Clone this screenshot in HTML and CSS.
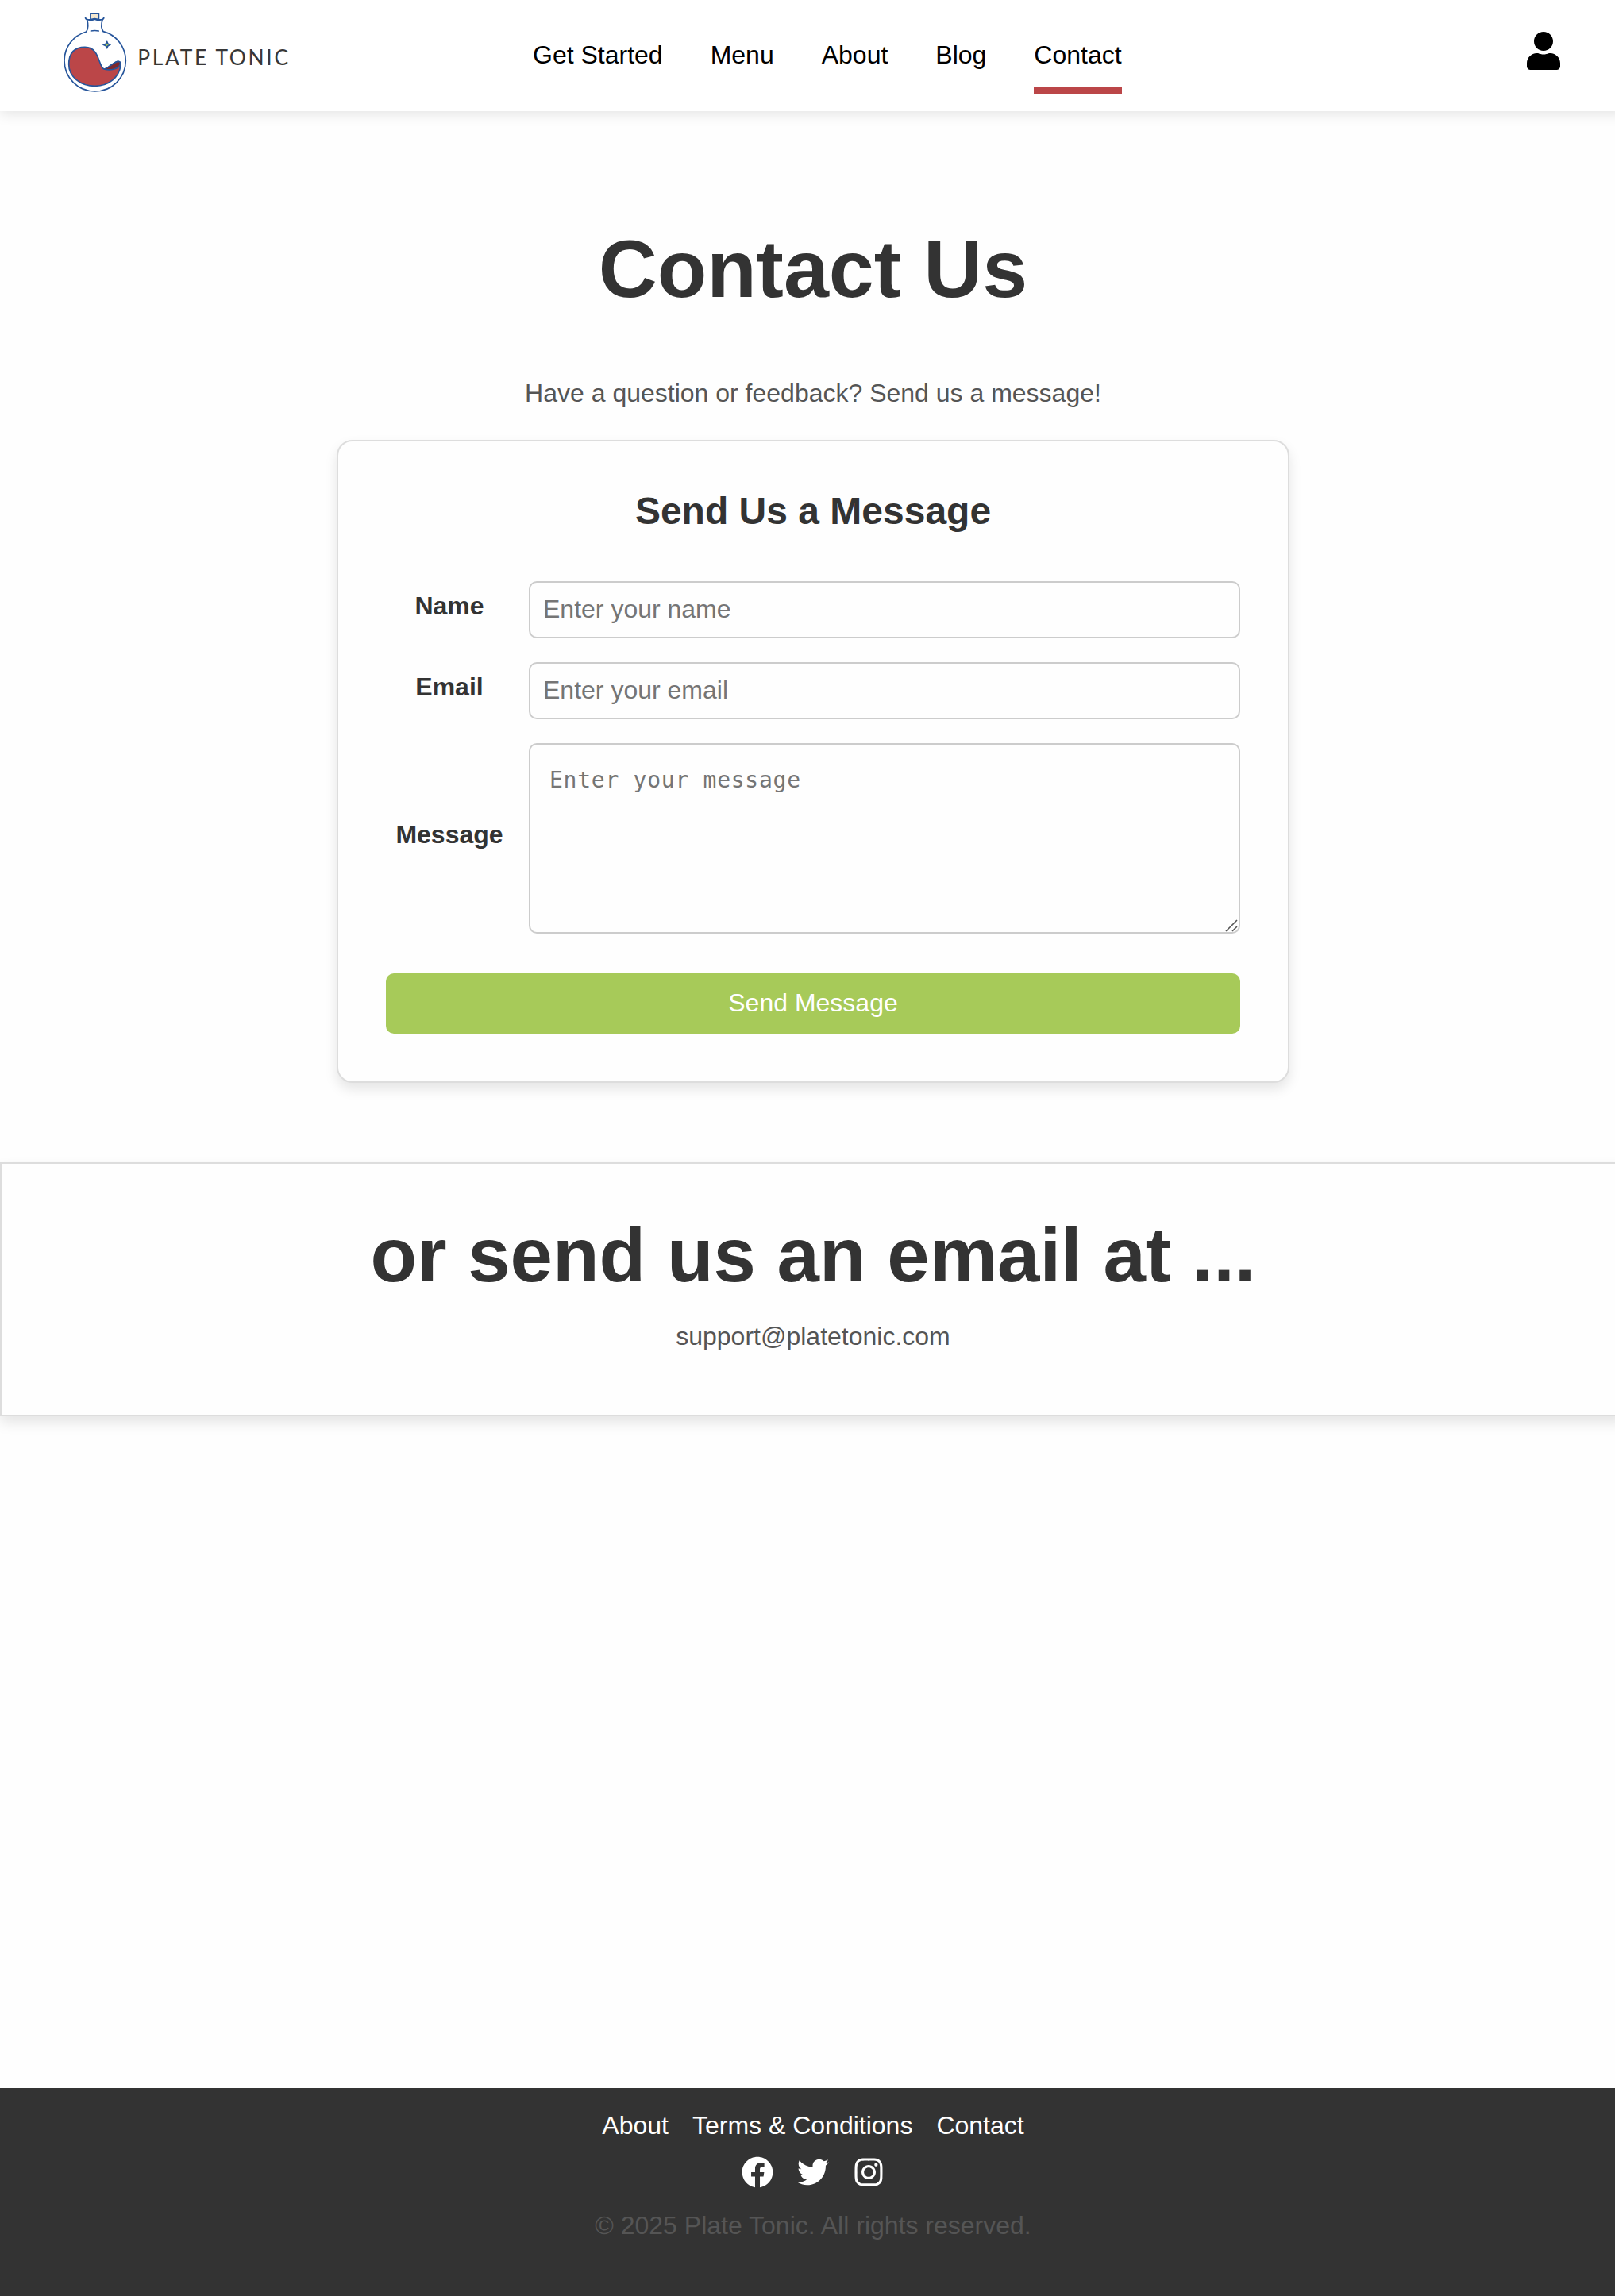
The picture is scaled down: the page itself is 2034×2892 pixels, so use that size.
FILE: index.html
```html
<!DOCTYPE html>
<html lang="en">
<head>
<meta charset="utf-8">
<title>Contact | Plate Tonic</title>
<link rel="stylesheet" href="styles.css">
</head>
<body>
<div class="page">
  <header class="header">
    <a class="logo" href="#">
      <svg viewBox="0 0 960 420" width="320" height="140" role="img" aria-label="Plate Tonic">
        <g stroke="#26559b" stroke-linecap="round" stroke-linejoin="round" fill="none">
          <path d="M162 51H193V74L178 71L162 74Z" fill="#f3e7cf" stroke-width="5.5"/>
          <path d="M143 68C145 75 151 75 159 75C167 76 172 76 178 72C184 76 190 76 197 75C205 75 210 75 212 68" stroke-width="6"/>
          <path d="M149 75C154 92 153 109 146 120C97 134 63 178 63 229C63 294 115 345 179 345C243 345 295 294 295 229C295 178 260 132 210 119C202 108 202 92 207 75" stroke-width="5"/>
          <path d="M163 117Q178 114 193 117" stroke-width="4"/>
          <path d="M80 243C80 200 102 178 141 178C202 178 190 262 217 262C238 250 252 232 267 232C275 232 277 240 276 247C270 292 232 324 180 325C121 325 80 288 80 243Z" fill="#bb4648" stroke-width="5"/>
          <path d="M215 261C238 252 253 232 267 232C276 232 277 241 271 249C263 260 238 268 215 261Z" fill="#7f282d" stroke-width="5"/>
          <path d="M224 157L228 166L237 169L228 173L224 182L220 173L210 169L220 166Z" fill="#a8ca59" stroke-width="5"/>
        </g>
        <text class="logo-text" x="340" y="245" textLength="569" lengthAdjust="spacing">PLATE TONIC</text>
      </svg>
    </a>
    <nav class="nav">
      <a href="#">Get Started</a>
      <a href="#">Menu</a>
      <a href="#">About</a>
      <a href="#">Blog</a>
      <a class="active" href="#">Contact</a>
    </nav>
    <a class="user" href="#" aria-label="Account">
      <svg viewBox="0 0 448 512" width="42" height="48"><path d="M224 256c70.7 0 128-57.3 128-128S294.7 0 224 0 96 57.3 96 128s57.3 128 128 128zm89.6 32h-16.7c-22.2 10.2-46.9 16-72.9 16s-50.6-5.8-72.9-16h-16.7C60.2 288 0 348.2 0 422.4V464c0 26.5 21.5 48 48 48h352c26.5 0 48-21.5 48-48v-41.6c0-74.2-60.2-134.4-134.4-134.4z"/></svg>
    </a>
  </header>

  <main class="main">
    <h1 class="title">Contact Us</h1>
    <p class="lead">Have a question or feedback? Send us a message!</p>

    <form class="card">
      <h2 class="card-title">Send Us a Message</h2>
      <div class="fields">
        <label for="name">Name</label>
        <input id="name" type="text" placeholder="Enter your name">
        <label for="email">Email</label>
        <input id="email" type="email" placeholder="Enter your email">
        <label for="message">Message</label>
        <div class="textarea-wrap">
          <textarea id="message" placeholder="Enter your message"></textarea>
          <svg class="grip" viewBox="0 0 16 16" width="16" height="16"><path d="M1 15L15 1M9 15L15 9"/></svg>
        </div>
      </div>
      <button class="submit" type="button">Send Message</button>
    </form>

    <section class="email-panel">
      <h2>or send us an email at ...</h2>
      <p>support@platetonic.com</p>
    </section>
  </main>

  <footer class="footer">
    <div class="footer-links">
      <a href="#">About</a>
      <a href="#">Terms &amp; Conditions</a>
      <a href="#">Contact</a>
    </div>
    <div class="social">
      <svg viewBox="0 0 512 512"><path d="M504 256C504 119 393 8 256 8S8 119 8 256c0 123.78 90.69 226.38 209.25 245V327.69h-63V256h63v-54.64c0-62.15 37-96.48 93.67-96.48 27.14 0 55.52 4.84 55.52 4.84v61h-31.28c-30.8 0-40.41 19.12-40.41 38.73V256h68.78l-11 71.69h-57.78V501C413.31 482.38 504 379.78 504 256z"/></svg>
      <svg viewBox="0 0 512 512"><path d="M459.37 151.716c.325 4.548.325 9.097.325 13.645 0 138.72-105.583 298.558-298.558 298.558-59.452 0-114.68-17.219-161.137-47.106 8.447.974 16.568 1.299 25.34 1.299 49.055 0 94.213-16.568 130.274-44.832-46.132-.975-84.792-31.188-98.112-72.772 6.498.974 12.995 1.624 19.818 1.624 9.421 0 18.843-1.3 27.614-3.573-48.081-9.747-84.143-51.98-84.143-102.985v-1.299c13.969 7.797 30.214 12.67 47.431 13.319-28.264-18.843-46.781-51.005-46.781-87.391 0-19.492 5.197-37.36 14.294-52.954 51.655 63.675 129.3 105.258 216.365 109.807-1.624-7.797-2.599-15.918-2.599-24.04 0-57.828 46.782-104.934 104.934-104.934 30.213 0 57.502 12.67 76.67 33.137 23.715-4.548 46.456-13.32 66.599-25.34-7.798 24.366-24.366 44.833-46.132 57.827 21.117-2.273 41.584-8.122 60.426-16.243-14.292 20.791-32.161 39.308-52.628 54.253z"/></svg>
      <svg viewBox="0 0 448 512"><path d="M224.1 141c-63.6 0-114.9 51.3-114.9 114.9s51.3 114.9 114.9 114.9S339 319.5 339 255.9 287.7 141 224.1 141zm0 189.6c-41.1 0-74.7-33.5-74.7-74.7s33.5-74.7 74.7-74.7 74.7 33.5 74.7 74.7-33.6 74.7-74.7 74.7zm146.4-194.3c0 14.9-12 26.8-26.8 26.8-14.9 0-26.8-12-26.8-26.8s12-26.8 26.8-26.8 26.8 12 26.8 26.8zm76.1 27.2c-1.7-35.9-9.9-67.7-36.2-93.9-26.2-26.2-58-34.4-93.9-36.2-37-2.1-147.9-2.1-184.9 0-35.8 1.7-67.6 9.9-93.9 36.1s-34.4 58-36.2 93.9c-2.1 37-2.1 147.9 0 184.9 1.7 35.9 9.9 67.7 36.2 93.9s58 34.4 93.9 36.2c37 2.1 147.9 2.1 184.9 0 35.9-1.7 67.7-9.9 93.9-36.2 26.2-26.2 34.4-58 36.2-93.9 2.1-37 2.1-147.8 0-184.8zM398.8 388c-7.8 19.6-22.9 34.7-42.6 42.6-29.5 11.7-99.5 9-132.1 9s-102.7 2.6-132.1-9c-19.6-7.8-34.7-22.9-42.6-42.6-11.7-29.5-9-99.5-9-132.1s-2.6-102.7 9-132.1c7.8-19.6 22.9-34.7 42.6-42.6 29.5-11.7 99.5-9 132.1-9s102.7-2.6 132.1 9c19.6 7.8 34.7 22.9 42.6 42.6 11.7 29.5 9 99.5 9 132.1s2.7 102.7-9 132.1z"/></svg>
    </div>
    <p class="copyright">© 2025 Plate Tonic. All rights reserved.</p>
  </footer>
</div>
</body>
</html>
```
FILE: styles.css
```css
* {
  box-sizing: border-box;
  margin: 0;
  padding: 0;
}

html,
body {
  overflow: hidden;
}

body {
  background: #fefefe;
  color: #333;
  font-family: "Liberation Sans", Arial, sans-serif;
  font-size: 32px;
  line-height: 40px;
}

a {
  color: inherit;
  text-decoration: none;
}

svg {
  display: block;
}

.page {
  display: flex;
  flex-direction: column;
  width: 2048px;
  min-height: 2892px;
}

/* Header */
.header {
  display: flex;
  align-items: flex-start;
  height: 140px;
  padding: 0 83px 0 60px;
  background: #fff;
  box-shadow: 0 4px 16px rgba(0, 0, 0, 0.1);
}

.logo-text {
  font-family: Lato, sans-serif;
  font-size: 79px;
  font-weight: 400;
  fill: #373737;
}

.nav {
  display: flex;
  gap: 60px;
  margin-left: 291px;
  padding-top: 49px;
  color: #000;
}

.nav a {
  padding-bottom: 21px;
  border-bottom: 8px solid transparent;
}

.nav .active {
  border-color: #bb4648;
}

.user {
  margin: 40px 0 0 auto;
  color: #000;
}

/* Contact form */
.main {
  flex: 1;
  padding-top: 139px;
  text-align: center;
}

.title {
  font-size: 102.4px;
  line-height: 120px;
}

.lead {
  margin: 76px 0 39px;
  color: #555;
}

.card {
  width: 1200px;
  margin: 0 auto 100px;
  padding: 60px;
  border: 2px solid #ddd;
  border-radius: 20px;
  background: #fefefe;
  box-shadow: 0 8px 16px rgba(0, 0, 0, 0.1);
}

.card-title {
  margin-bottom: 60px;
  font-size: 48px;
  line-height: 56px;
}

.fields {
  display: grid;
  grid-template-columns: 160px 1fr;
  align-items: center;
  gap: 30px 20px;
}

.fields label {
  margin-bottom: 10px;
  font-weight: bold;
}

.fields input,
.fields textarea {
  display: block;
  width: 100%;
  border: 2px solid #ccc;
  border-radius: 10px;
  background: #fefefe;
  font: inherit;
}

.fields input {
  height: 72px;
  padding: 15px 16px 17px;
  line-height: 36px;
}

.fields textarea {
  height: 240px;
  padding: 25px 24px 23px;
  resize: none;
  font-family: "DejaVu Sans Mono", monospace;
  font-size: 28px;
  letter-spacing: 0.74px;
}

.fields ::placeholder {
  color: #757575;
}

.textarea-wrap {
  position: relative;
}

.grip {
  position: absolute;
  right: 3px;
  bottom: 2px;
  fill: none;
  stroke: #555;
  stroke-width: 1.6;
}

.submit {
  display: block;
  width: 100%;
  height: 76px;
  margin-top: 50px;
  padding-bottom: 2px;
  border: 0;
  border-radius: 10px;
  background: #a7ca59;
  color: #fff;
  font: inherit;
}

/* Email panel */
.email-panel {
  height: 320px;
  padding-top: 60px;
  border: 2px solid #ddd;
  background: #fefefe;
  box-shadow: 0 8px 16px rgba(0, 0, 0, 0.1);
}

.email-panel h2 {
  margin-bottom: 27px;
  font-size: 96px;
  line-height: 110px;
}

.email-panel p {
  color: #555;
}

/* Footer */
.footer {
  height: 262px;
  padding-top: 27px;
  background: #333;
  color: #fff;
  text-align: center;
}

.footer-links,
.social {
  display: flex;
  justify-content: center;
  gap: 30px;
}

.social {
  margin: 19px 0 27px;
}

.social svg {
  width: 40px;
  height: 40px;
  fill: currentColor;
}

.copyright {
  color: #555;
}
```
